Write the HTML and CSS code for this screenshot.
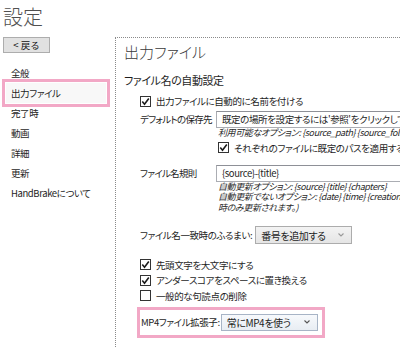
FILE: index.html
```html
<!DOCTYPE html>
<html lang="ja">

<head>
  <meta charset="UTF-8" />
  <title>設定</title>
  <link rel="stylesheet" href="styles.css">
</head>

<body>
  <div class="title">設定</div>
  <div class="main">
    <!-- 左のメニュー -->
    <div class="side">
      <button class="back">&lt; 戻る</button>
      <ul class="nav">
        <li>全般</li>
        <li class="active">出力ファイル</li>
        <li>完了時</li>
        <li>動画</li>
        <li>詳細</li>
        <li>更新</li>
        <li>HandBrakeについて</li>
      </ul>
    </div>
    <!-- 出力ファイルの設定 -->
    <div class="panel">
      <h1>出力ファイル</h1>
      <h2>ファイル名の自動設定</h2>
      <label class="check top">
        <span class="cb"><svg viewBox="0 0 9 9"><path d="M1.3 4.6 L3.5 7.2 L7.8 1.4" /></svg></span>
        出力ファイルに自動的に名前を付ける
      </label>

      <div class="field first">
        <span class="label">デフォルトの保存先</span>
        <div class="value">
          <div class="input">既定の場所を設定するには'参照'をクリックしてください。</div>
          <p class="hint">利用可能なオプション: {source_path} {source_folder_name}</p>
          <label class="check">
            <span class="cb"><svg viewBox="0 0 9 9"><path d="M1.3 4.6 L3.5 7.2 L7.8 1.4" /></svg></span>
            それぞれのファイルに既定のパスを適用する。
          </label>
        </div>
      </div>

      <div class="field second">
        <span class="label">ファイル名規則</span>
        <div class="value">
          <div class="input">{source}-{title}</div>
          <p class="hint">自動更新オプション: {source} {title} {chapters}<br>
            自動更新でないオプション: {date} {time} {creation-date} {creation-time}<br>
            時のみ更新されます。)</p>
        </div>
      </div>

      <div class="row behave">
        <span class="label">ファイル名一致時のふるまい:</span>
        <div class="select light">番号を追加する<svg viewBox="0 0 6 4"><path d="M0.5 0.5 L3 3 L5.5 0.5" /></svg></div>
      </div>

      <div class="checks">
        <label class="check">
          <span class="cb"><svg viewBox="0 0 9 9"><path d="M1.3 4.6 L3.5 7.2 L7.8 1.4" /></svg></span>
          先頭文字を大文字にする
        </label>
        <label class="check">
          <span class="cb"><svg viewBox="0 0 9 9"><path d="M1.3 4.6 L3.5 7.2 L7.8 1.4" /></svg></span>
          アンダースコアをスペースに置き換える
        </label>
        <label class="check">
          <span class="cb"></span>
          一般的な句読点の削除
        </label>
      </div>

      <div class="row mp4">
        <span class="label">MP4ファイル拡張子:</span>
        <div class="select focus">常にMP4を使う<svg viewBox="0 0 6 4"><path d="M0.5 0.5 L3 3 L5.5 0.5" /></svg></div>
      </div>
    </div>
  </div>
</body>

</html>
```

FILE: styles.css
```css
* {
  margin: 0;
  padding: 0;
  box-sizing: border-box;
}

body {
  width: 400px;
  height: 347px;
  overflow: hidden;
  background: #fff;
  color: #1e1e1e;
  font-family: "Noto Sans CJK JP", "Noto Sans", sans-serif;
  font-size: 9.5px;
  letter-spacing: -0.4px;
  font-feature-settings: "palt" 1;
  font-variant-east-asian: proportional-width;
}

.title {
  height: 37px;
  padding: 4px 0 0 3px;
  font-size: 20px;
  line-height: 26px;
  font-weight: 300;
  letter-spacing: 0;
  color: #505050;
}

.main {
  display: flex;
  height: 310px;
}

/* 左のメニュー */
.side {
  width: 115px;
  flex: none;
}

.back {
  display: block;
  width: 47px;
  height: 16px;
  margin-left: 3px;
  border: 1px solid #adadad;
  background: #e1e1e1;
  color: #111;
  font-family: inherit;
  font-size: 9.5px;
  line-height: 14px;
  letter-spacing: 0;
}

.nav {
  list-style: none;
  margin-top: 10px;
}

.nav li {
  height: 20px;
  line-height: 20px;
  margin: 0 9px 0 6px;
  padding-left: 5px;
  white-space: nowrap;
}

.nav .active {
  outline: 3px solid #f2a8c6;
  outline-offset: 1px;
  background: #f8f8f8;
}

/* 右の設定パネル */
.panel {
  flex: 1;
  min-width: 0;
  overflow: hidden;
  padding-left: 8px;
  border-top: 1px dotted #8a8a8a;
  border-left: 1px dotted #8a8a8a;
}

.panel h1 {
  margin-top: 3px;
  font-size: 15px;
  line-height: 22px;
  font-weight: 300;
  letter-spacing: 0;
  color: #3a3a3a;
}

.panel h2 {
  margin-top: 8px;
  font-size: 11px;
  line-height: 18px;
  font-weight: normal;
}

.check {
  display: flex;
  align-items: center;
  height: 14px;
  gap: 5px;
  white-space: nowrap;
}

.check.top {
  margin: 5px 0 0 16px;
}

.cb {
  flex: none;
  width: 11px;
  height: 11px;
  border: 1px solid #333;
  background: #fff;
  display: flex;
  align-items: center;
  justify-content: center;
}

.cb svg {
  width: 9px;
  height: 9px;
  fill: none;
  stroke: #1a1a1a;
  stroke-width: 1.6;
}

.field {
  display: grid;
  grid-template-columns: 76px 1fr;
  margin-left: 16px;
}

.field.first {
  margin-top: 3px;
}

.field.second {
  margin-top: 10px;
}

.field .label {
  line-height: 17px;
  letter-spacing: -0.7px;
  white-space: nowrap;
}

.input {
  width: 260px;
  height: 17px;
  padding-left: 5px;
  border: 1px solid #abadb3;
  border-top-color: #8e9097;
  line-height: 15px;
  white-space: nowrap;
  overflow: hidden;
}

.hint {
  font-size: 9px;
  line-height: 10.5px;
  font-style: italic;
  color: #2a2a2a;
  white-space: nowrap;
  padding-left: 2px;
}

.value .check {
  margin-top: 2px;
  padding-left: 2px;
}

.row {
  display: flex;
  align-items: center;
  gap: 3px;
  white-space: nowrap;
}

.row.behave {
  margin: 13px 0 0 16px;
}

.select {
  display: flex;
  align-items: center;
  justify-content: space-between;
  flex: none;
  width: 97px;
  height: 18px;
  padding: 0 7px 0 5px;
  border: 1px solid #acacac;
  background: linear-gradient(#f3f3f3, #e5e5e5);
  font-size: 10px;
}

.select svg {
  width: 6px;
  height: 4px;
  fill: none;
  stroke: #555;
  stroke-width: 1.1;
}

.select.light svg {
  stroke: #999;
}

.checks {
  margin: 13px 0 0 16px;
}

.checks .check {
  height: 15.5px;
}

.row.mp4 {
  display: inline-flex;
  gap: 1px;
  margin: 3px 0 0 13px;
  height: 31px;
  padding: 0 4px 0 1px;
  border: 3px solid #f2a8c6;
}

.select.focus {
  height: 17px;
  border-color: #a7b4c6;
  background: linear-gradient(#f7f9fc, #e8edf3);
}
```
